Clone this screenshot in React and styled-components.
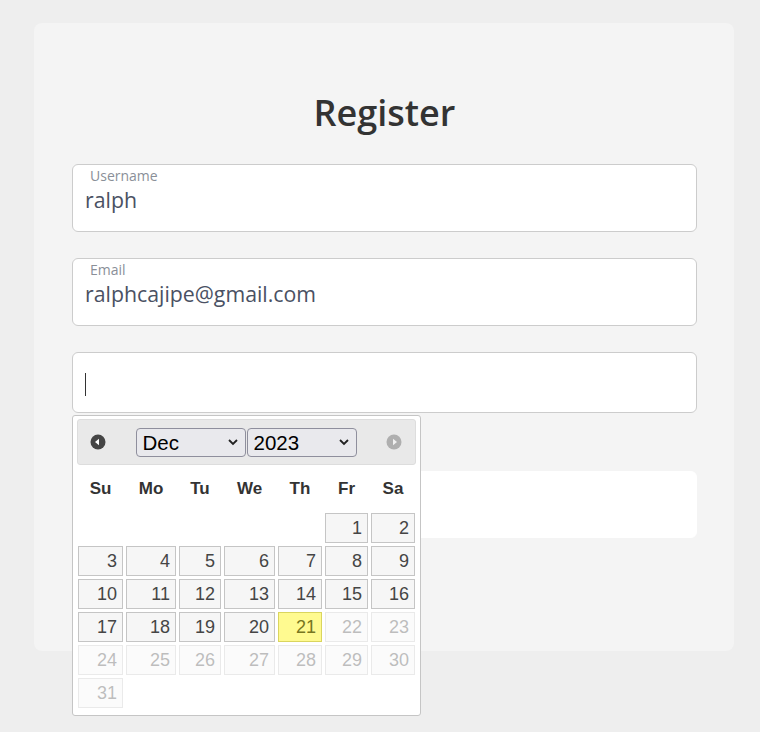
import styled, { createGlobalStyle } from 'styled-components';

const GlobalStyle = createGlobalStyle`
  html, body {
    margin: 0;
    padding: 0;
    background: #eeeeee;
  }
  body {
    font-family: "Open Sans", "Noto Sans", sans-serif;
  }
`;

const Page = styled.div`
  padding: 23px 0 0 34px;
  min-height: 732px;
  box-sizing: border-box;
`;

const Card = styled.div`
  width: 700px;
  height: 628px;
  box-sizing: border-box;
  background: #f4f4f4;
  border-radius: 8px;
  padding: 69px 37px 0 38px;
`;

const Title = styled.h1`
  margin: 0 0 30px;
  text-align: center;
  font-size: 36px;
  line-height: 42px;
  font-weight: 600;
  color: #333333;
`;

const Field = styled.div`
  position: relative;
  height: ${(p) => p.$height || 68}px;
  box-sizing: border-box;
  background: #ffffff;
  border: 1px solid ${(p) => (p.$plain ? '#ffffff' : '#cccccc')};
  border-radius: 6px;
  margin: ${(p) => p.$margin || '0 0 26px'};
  padding: 4px 12px 0;
  display: flex;
  flex-direction: column;
`;

const Label = styled.span`
  font-size: 14px;
  line-height: 14px;
  color: #8a8f98;
  padding-left: 5px;
`;

const Value = styled.span`
  font-size: 21.3px;
  line-height: 24px;
  margin-top: 5px;
  color: #4a5163;
`;

const Caret = styled.span`
  width: 1px;
  height: 23px;
  background: #333333;
  margin: auto 0;
`;

const Picker = styled.div`
  position: absolute;
  top: 62px;
  left: -1px;
  width: 349px;
  box-sizing: border-box;
  background: #ffffff;
  border: 1px solid #c5c5c5;
  border-radius: 3px;
  padding: 3px 4px 7px;
  font-family: "Liberation Sans", Arial, sans-serif;
  z-index: 2;
`;

const PickerHeader = styled.div`
  height: 46px;
  box-sizing: border-box;
  background: #e9e9e9;
  border: 1px solid #dddddd;
  border-radius: 3px;
  display: flex;
  align-items: center;
  padding: 0 13px 0 12px;
`;

const NavButton = styled.span`
  width: 16px;
  height: 16px;
  display: flex;
  opacity: ${(p) => (p.$disabled ? 0.35 : 1)};
`;

const Selects = styled.div`
  flex: 1;
  display: flex;
  justify-content: center;
  gap: 1px;
`;

const SelectWrap = styled.div`
  position: relative;
  width: 110px;
  height: 29px;
`;

const Select = styled.select`
  appearance: none;
  width: 100%;
  height: 100%;
  box-sizing: border-box;
  background: #e9e9ed;
  border: 1px solid #8f8f9d;
  border-radius: 4px;
  padding: 0 0 0 6px;
  font-family: "Liberation Sans", Arial, sans-serif;
  font-size: 20.5px;
  color: #000000;
`;

const Chevron = styled.svg`
  position: absolute;
  right: 8px;
  top: 11px;
  pointer-events: none;
`;

const DayGrid = styled.div`
  display: grid;
  grid-template-columns: 45px 50px 42px 51px 44px 43px 44px;
  column-gap: 3px;
  row-gap: 3px;
  grid-auto-rows: 30px;
  margin: 0 1px;
`;

const NameRow = styled(DayGrid)`
  grid-auto-rows: 38px;
  margin: 5px 1px 5px;
`;

const DayName = styled.span`
  display: flex;
  align-items: center;
  justify-content: center;
  font-weight: bold;
  font-size: 17px;
  color: #333333;
`;

const Day = styled.span`
  display: flex;
  align-items: center;
  justify-content: flex-end;
  box-sizing: border-box;
  padding-right: 5px;
  font-size: 18px;
  border: 1px solid ${(p) => (p.$today ? '#dad55e' : '#c5c5c5')};
  background: ${(p) => (p.$today ? '#fffa90' : '#f6f6f6')};
  color: ${(p) => (p.$today ? '#777620' : '#454545')};
  opacity: ${(p) => (p.$disabled ? 0.35 : 1)};
`;

const Blank = styled.span``;

const names = ['Su', 'Mo', 'Tu', 'We', 'Th', 'Fr', 'Sa'];

function NavIcon({ dir }) {
  return (
    <svg width="16" height="16" viewBox="0 0 16 16">
      <circle cx="8" cy="8" r="7.5" fill="#454545" />
      {dir === 'prev' ? (
        <path d="M5 8 L9 4.8 L9 11.2 Z" fill="#ffffff" />
      ) : (
        <path d="M11 8 L7 4.8 L7 11.2 Z" fill="#ffffff" />
      )}
    </svg>
  );
}

function DatePicker() {
  const cells = [];
  for (let i = 0; i < 5; i++) cells.push(<Blank key={'b' + i} />);
  for (let d = 1; d <= 31; d++) {
    cells.push(
      <Day key={d} $today={d === 21} $disabled={d > 21}>
        {d}
      </Day>
    );
  }

  return (
    <Picker>
      <PickerHeader>
        <NavButton>
          <NavIcon dir="prev" />
        </NavButton>
        <Selects>
          <SelectWrap>
            <Select defaultValue="Dec">
              <option>Nov</option>
              <option>Dec</option>
            </Select>
            <Chevron width="10" height="7" viewBox="0 0 10 7">
              <path d="M1 1 L5 5 L9 1" fill="none" stroke="#222" strokeWidth="1.8" />
            </Chevron>
          </SelectWrap>
          <SelectWrap>
            <Select defaultValue="2023">
              <option>2022</option>
              <option>2023</option>
            </Select>
            <Chevron width="10" height="7" viewBox="0 0 10 7">
              <path d="M1 1 L5 5 L9 1" fill="none" stroke="#222" strokeWidth="1.8" />
            </Chevron>
          </SelectWrap>
        </Selects>
        <NavButton $disabled>
          <NavIcon dir="next" />
        </NavButton>
      </PickerHeader>
      <NameRow>
        {names.map((n) => (
          <DayName key={n}>{n}</DayName>
        ))}
      </NameRow>
      <DayGrid>{cells}</DayGrid>
    </Picker>
  );
}

export default function App() {
  return (
    <Page>
      <GlobalStyle />
      <Card>
        <Title>Register</Title>
        <Field>
          <Label>Username</Label>
          <Value>ralph</Value>
        </Field>
        <Field>
          <Label>Email</Label>
          <Value>ralphcajipe@gmail.com</Value>
        </Field>
        <Field $height={61} $margin="0">
          <Caret />
          <DatePicker />
        </Field>
        <Field $height={67} $plain $margin="58px 0 0" />
      </Card>
    </Page>
  );
}
